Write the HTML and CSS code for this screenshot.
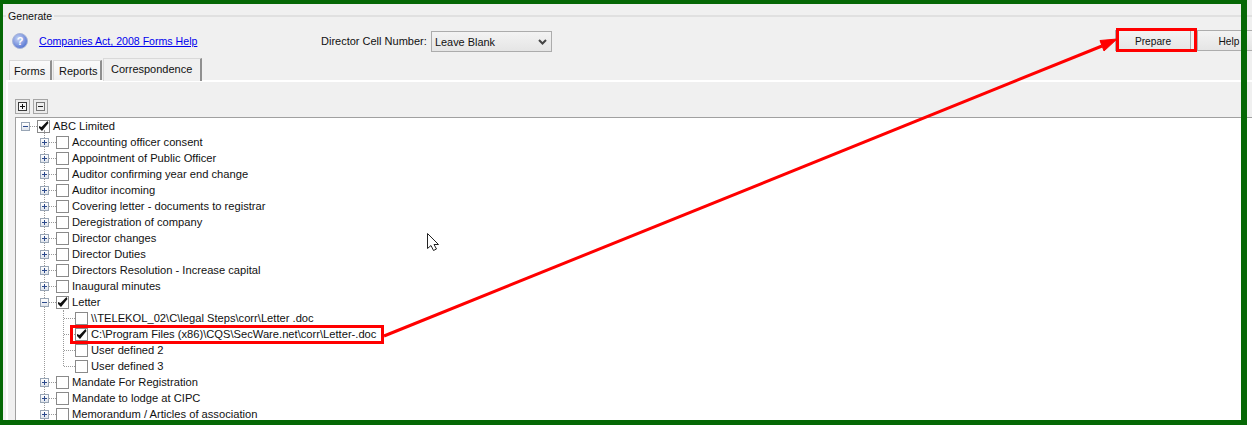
FILE: index.html
```html
<!DOCTYPE html>
<html lang="en">
<head>
<meta charset="utf-8">
<title>Generate</title>
<link rel="stylesheet" href="styles.css">
</head>
<body>
<div class="page">
  <fieldset class="group">
    <legend class="group-title">Generate</legend>
    <div class="toolbar">
      <svg class="help-icon" width="16" height="16" viewBox="0 0 16 16">
        <defs><radialGradient id="hg" cx="40%" cy="35%" r="70%"><stop offset="0" stop-color="#c9d6f5"/><stop offset="1" stop-color="#4f6fd0"/></radialGradient></defs>
        <circle cx="8" cy="8" r="7.5" fill="url(#hg)" stroke="#a9b6d8"/>
        <text x="8" y="12" text-anchor="middle" class="help-q">?</text>
      </svg>
      <a class="help-link" href="#">Companies Act, 2008 Forms Help</a>
      <label class="cell-label">Director Cell Number:</label>
      <div class="select"><span>Leave Blank</span>
        <svg width="9" height="6" viewBox="0 0 9 6"><path d="M1 1l3.500 3.500L8 1" fill="none" stroke="#444" stroke-width="2"/></svg>
      </div>
      <div class="actions">
        <button class="btn btn-prepare">Prepare</button>
        <button class="btn btn-help">Help</button>
      </div>
    </div>
    <div class="tabs">
      <div class="tab tab-forms">Forms</div>
      <div class="tab tab-reports">Reports</div>
      <div class="tab tab-active">Correspondence</div>
    </div>
    <div class="panel">
      <div class="tool-row">
        <span class="mini"><svg width="9" height="9" viewBox="0 0 9 9"><rect x=".5" y=".5" width="8" height="8" fill="#f6f6f6" stroke="#3a3a3a"/><path d="M2 4.500h5M4.500 2v5" stroke="#111" fill="none"/></svg></span>
        <span class="mini"><svg width="9" height="9" viewBox="0 0 9 9"><rect x=".5" y=".5" width="8" height="8" fill="#efefef" stroke="#777"/><path d="M2 4.500h5" stroke="#222" fill="none"/></svg></span>
      </div>
      <div class="tree">
        <div class="row lv0"><span class="exp minus"></span><span class="dash"></span><span class="cb on"></span><span class="txt">ABC Limited</span></div>
        <div class="kids">
          <div class="row"><span class="exp plus"></span><span class="dash"></span><span class="cb"></span><span class="txt">Accounting officer consent</span></div>
          <div class="row"><span class="exp plus"></span><span class="dash"></span><span class="cb"></span><span class="txt">Appointment of Public Officer</span></div>
          <div class="row"><span class="exp plus"></span><span class="dash"></span><span class="cb"></span><span class="txt">Auditor confirming year end change</span></div>
          <div class="row"><span class="exp plus"></span><span class="dash"></span><span class="cb"></span><span class="txt">Auditor incoming</span></div>
          <div class="row"><span class="exp plus"></span><span class="dash"></span><span class="cb"></span><span class="txt">Covering letter - documents to registrar</span></div>
          <div class="row"><span class="exp plus"></span><span class="dash"></span><span class="cb"></span><span class="txt">Deregistration of company</span></div>
          <div class="row"><span class="exp plus"></span><span class="dash"></span><span class="cb"></span><span class="txt">Director changes</span></div>
          <div class="row"><span class="exp plus"></span><span class="dash"></span><span class="cb"></span><span class="txt">Director Duties</span></div>
          <div class="row"><span class="exp plus"></span><span class="dash"></span><span class="cb"></span><span class="txt">Directors Resolution - Increase capital</span></div>
          <div class="row"><span class="exp plus"></span><span class="dash"></span><span class="cb"></span><span class="txt">Inaugural minutes</span></div>
          <div class="row"><span class="exp minus"></span><span class="dash"></span><span class="cb on"></span><span class="txt">Letter</span></div>
          <div class="kids kids-inner">
            <div class="row"><span class="dash dash-leaf"></span><span class="cb"></span><span class="txt">\\TELEKOL_02\C\legal Steps\corr\Letter .doc</span></div>
            <div class="row"><span class="dash dash-leaf"></span><span class="cb on"></span><span class="txt">C:\Program Files (x86)\CQS\SecWare.net\corr\Letter-.doc</span></div>
            <div class="row"><span class="dash dash-leaf"></span><span class="cb"></span><span class="txt">User defined 2</span></div>
            <div class="row"><span class="dash dash-leaf"></span><span class="cb"></span><span class="txt">User defined 3</span></div>
          </div>
          <div class="row"><span class="exp plus"></span><span class="dash"></span><span class="cb"></span><span class="txt">Mandate For Registration</span></div>
          <div class="row"><span class="exp plus"></span><span class="dash"></span><span class="cb"></span><span class="txt">Mandate to lodge at CIPC</span></div>
          <div class="row"><span class="exp plus"></span><span class="dash"></span><span class="cb"></span><span class="txt">Memorandum / Articles of association</span></div>
        </div>
      </div>
    </div>
  </fieldset>
  <div class="frame"></div>
  <svg class="marks" width="1252" height="425" viewBox="0 0 1252 425">
    <rect x="1117.500" y="29.500" width="78" height="21" fill="none" stroke="#f00" stroke-width="3"/>
    <rect x="71.500" y="326.500" width="311" height="16" fill="none" stroke="#f00" stroke-width="3"/>
    <path d="M384 336L1102 46" fill="none" stroke="#f00" stroke-width="3"/>
    <path d="M1117 39L1100 40.500L1104 51Z" fill="#f00" stroke="#f00"/>
    <path d="M427.500 233.500V248.500L431 245.500L433.500 250.500L436.500 249L434 244.500H438.500Z" fill="#fff" stroke="#222"/>
  </svg>
</div>
</body>
</html>
```
FILE: styles.css
```css
* { box-sizing: border-box; }
html, body { margin: 0; padding: 0; }
body {
  width: 1252px;
  height: 425px;
  overflow: hidden;
  background: #f0f0f0;
  font-family: "Liberation Sans", Arial, sans-serif;
  font-size: 11px;
  color: #111;
}
.page { position: relative; width: 1252px; height: 425px; padding-top: 9px; overflow: hidden; background: #f0f0f0; }
.frame {
  position: absolute;
  left: 0;
  top: 0;
  width: 1247px;
  height: 425px;
  border: solid #056805;
  border-width: 4px 6px 5px 3px;
  pointer-events: none;
}
.marks { position: absolute; left: 0; top: 0; pointer-events: none; }

.group {
  margin: 0;
  padding: 0;
  border: 0;
  border-top: 2px solid #e0e0e0;
  width: 1252px;
  height: 425px;
  min-width: 0;
}
.group-title {
  margin-left: 6px;
  padding: 0 2px;
  line-height: 14px;
  height: 14px;
  font-size: 10.6px;
  background: #f0f0f0;
}
.toolbar {
  display: flex;
  align-items: flex-start;
  height: 22px;
  margin-top: 7px;
  padding-left: 12px;
  line-height: 22px;
}
.help-icon { flex: none; margin-top: 3px; }
.help-link { margin-left: 11px; width: 282px; font-size: 10.6px; color: #0000ee; text-decoration: underline; white-space: nowrap; }
.help-q { font: bold 11px "Liberation Sans", sans-serif; fill: #fff; }
.cell-label { width: 110px; white-space: nowrap; }
.select {
  width: 121px;
  height: 21px;
  margin-top: 1px;
  border: 1px solid #acacac;
  background: linear-gradient(#f3f3f3, #e5e5e5);
  display: flex;
  align-items: center;
  justify-content: space-between;
  padding: 0 4px 0 3px;
  font-size: 10.9px;
}
.actions { display: flex; margin-left: auto; margin-right: -9px; gap: 6px; }
.btn {
  height: 21px;
  font: inherit;
  font-size: 10.2px;
  color: #111;
  padding: 0;
  border: 1px solid #acacac;
  background: linear-gradient(#f3f3f3, #e5e5e5);
}
.btn-prepare { width: 76px; }
.btn-help { width: 64px; }

.tabs {
  display: flex;
  align-items: flex-end;
  height: 24px;
  margin-top: 4px;
  padding-left: 9px;
  position: relative;
  z-index: 1;
}
.tab {
  height: 20px;
  line-height: 20px;
  margin-right: 1px;
  background: linear-gradient(#fafafa, #f0f0f0);
  border: 1px solid #d9d9d9;
  border-right: 2px solid #8f8f8f;
  border-bottom: 0;
}
.tab-forms { width: 43px; padding-left: 4px; }
.tab-reports { width: 49px; padding-left: 5px; }
.tab-active {
  width: 99px;
  height: 23px;
  padding-left: 7px;
  background: #f0f0f0;
  margin-bottom: -1px;
  margin-right: 0;
}
.panel {
  height: 340px;
  border-top: 2px solid #fff;
  border-left: 2px solid #fff;
  margin-left: 6px;
  padding: 17px 0 0 7px;
}
.tool-row { display: flex; gap: 3px; height: 15px; }
.mini {
  width: 15px;
  height: 15px;
  border: 1px solid #a6a6a6;
  background: #ececec;
  display: flex;
  align-items: center;
  justify-content: center;
}
.tree {
  margin-top: 3px;
  background: #fff;
  border: solid #a0a0a0;
  border-width: 1px 0 0 1px;
  height: 320px;
  overflow: hidden;
}
.row {
  display: flex;
  align-items: center;
  height: 16px;
  white-space: nowrap;
  position: relative;
  font-size: 11.16px;
}
.row.lv0 { padding-left: 5px; }
.exp {
  width: 9px;
  height: 9px;
  flex: none;
  border: 1px solid #98a5b5;
  background: linear-gradient(#fff, #dfe4ec);
  position: relative;
}
.exp::before {
  content: "";
  position: absolute;
  left: 1px;
  top: 3px;
  width: 5px;
  height: 1px;
  background: #2c4a8c;
}
.exp.plus::after {
  content: "";
  position: absolute;
  left: 3px;
  top: 1px;
  width: 1px;
  height: 5px;
  background: #2c4a8c;
}
.dash {
  width: 7px;
  flex: none;
  border-top: 1px dotted #9a9a9a;
}
.dash-leaf { width: 11px; }
.cb {
  width: 13px;
  height: 13px;
  flex: none;
  border: 1px solid #8a8a8a;
  background: #fff;
  margin-right: 3px;
  position: relative;
}
.cb.on::after {
  content: "";
  position: absolute;
  left: -1px;
  top: -1px;
  width: 13px;
  height: 13px;
  background: #111;
  clip-path: polygon(2px 6.5px, 4.5px 7.5px, 10.5px 1.5px, 11.5px 3.5px, 5px 11.5px, 2px 8.5px);
}
.kids {
  margin-left: 24px;
  position: relative;
}
.kids::before {
  content: "";
  position: absolute;
  left: 4px;
  top: -4px;
  bottom: 0;
  border-left: 1px dotted #9a9a9a;
  z-index: 0;
}
.kids .exp { z-index: 1; }
.kids-inner { margin-left: 23px; }
.kids-inner::before { left: 0; top: 0; bottom: 8px; }
.kids-inner .row { padding-left: 1px; }
```
